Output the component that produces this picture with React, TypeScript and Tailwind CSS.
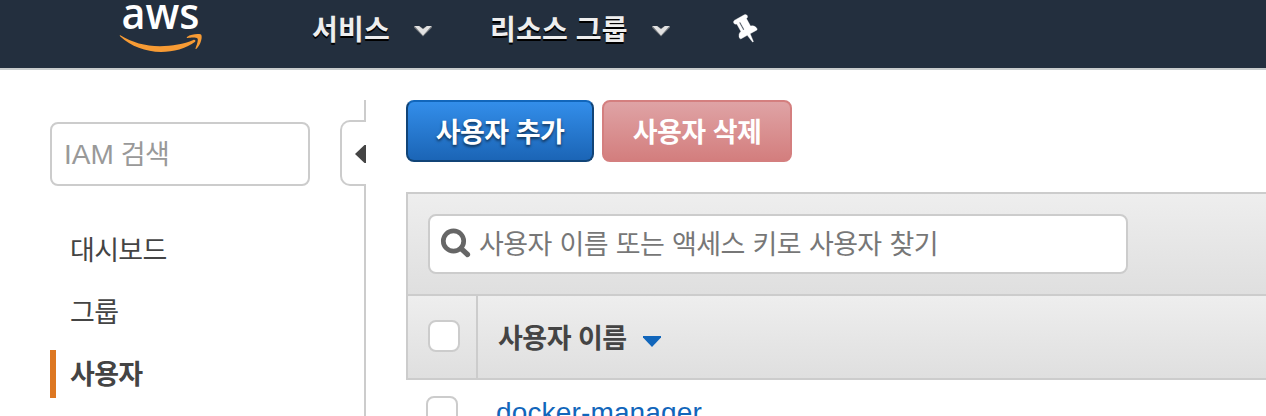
const HANGUL = "font-['Liberation_Sans','Noto_Sans_CJK_KR',sans-serif]";

function AwsLogo() {
  return (
    <svg className="block h-[68px] w-[84px] shrink-0" viewBox="119 0 84 68" aria-label="aws">
      <text
        x="121.5"
        y="28.5"
        fill="#fff"
        textLength="78"
        lengthAdjust="spacingAndGlyphs"
        className="font-['Open_Sans',sans-serif] text-[44px] font-semibold"
      >
        aws
      </text>
      <path
        d="M120.3 35.2C132 42.200 145 46.200 160 46.200C172 46.200 184 44 193.300 40C195 39.400 196.300 41 194.800 42.100C186 48.700 173.500 52 161 52C145.500 52 131 46.300 120.300 36.600C119.500 35.700 119.700 34.900 120.300 35.200Z"
        fill="#f79b34"
      />
      <path
        d="M187 36.900C191 34 198.300 33.500 201 34.500C202.800 36.500 201 44.500 196.500 48.700C195.800 49.300 195.200 49 195.500 48.200C196.600 45.400 198.600 40 197.500 38.400C196.200 37 190.500 37.500 187.700 37.900C186.800 38 186.500 37.300 187 36.900Z"
        fill="#f79b34"
      />
    </svg>
  );
}

function Chevron() {
  return (
    <svg className="block h-[12px] w-[18px]" viewBox="0 0 18 12">
      <path d="M0 1H5.500L9 3.500L12.500 1H18V2.500L9 11.500L0 2.500Z" fill="#73777b" />
      <path d="M0.500 1H5L9 4.200L13 1H17.500L9 10.500Z" fill="#e2e2e2" />
    </svg>
  );
}

function Pin() {
  return (
    <svg className="block h-[34px] w-[34px]" viewBox="0 0 34 34">
      <path
        transform="translate(10.5 4.500) rotate(-29) scale(0.0172 0.0168) translate(-896 -128)"
        fill="#fff"
        stroke="#fff"
        strokeWidth="20"
        d="M800 864v-448q0-14-9-23t-23-9-23 9-9 23v448q0 14 9 23t23 9 23-9 9-23zm672 352q0 26-19 45t-45 19h-429l-51 483q-2 12-10.500 20.500t-20.500 8.500h-1q-27 0-32-27l-76-485h-404q-26 0-45-19t-19-45q0-123 78.500-221.500t177.500-98.500v-512q-52 0-90-38t-38-90 38-90 90-38h640q52 0 90 38t38 90-38 90-90 38v512q99 0 177.500 98.500t78.500 221.500z"
      />
    </svg>
  );
}

function SearchIcon() {
  return (
    <svg className="block h-[32px] w-[32px] shrink-0" viewBox="0 0 32 32">
      <circle cx="13.500" cy="13" r="10.200" fill="none" stroke="#666" strokeWidth="4.700" />
      <path d="M21 20.500L27.500 26.500" stroke="#666" strokeWidth="5.200" strokeLinecap="round" />
    </svg>
  );
}

function NavMenu({ label }: { label: string }) {
  return (
    <div className="flex items-center pt-[2px]">
      <span className="whitespace-nowrap text-[28px] leading-[40px] font-bold tracking-[0.2px] text-[#eee] [text-shadow:0_2px_0_#000]">
        {label}
      </span>
      <span className="-mt-px ml-6">
        <Chevron />
      </span>
    </div>
  );
}

function Header() {
  return (
    <header className="flex h-[70px] items-start border-b-2 border-[#c8cccc] bg-[#232f3e] pl-[119px]">
      <AwsLogo />
      <nav className="flex h-[60px] items-center">
        <div className="ml-[109px] w-[178px]">
          <NavMenu label="서비스" />
        </div>
        <div className="w-[239px]">
          <NavMenu label="리소스 그룹" />
        </div>
        <Pin />
      </nav>
    </header>
  );
}

function Sidebar() {
  return (
    <aside className="flex w-[366px] shrink-0 justify-between">
      <div className="w-[310px] pt-[52px] pl-[50px]">
        <div className="flex h-16 items-center rounded-lg border-2 border-[#ccc] bg-white pt-[2px] pl-3 text-[27px] tracking-[-0.6px] text-[#999]">
          <span className="mr-[7px] text-[28px] tracking-normal">IAM</span>
          <span>검색</span>
        </div>
        <ul className="mt-[40px] flex flex-col gap-[14px] text-[27px] leading-[50px] tracking-[-0.7px] text-[#444]">
          <li className="h-12 pl-5">대시보드</li>
          <li className="h-12 pl-5">그룹</li>
          <li className="h-12 border-l-[6px] border-[#dd7722] pl-[14px] font-bold">사용자</li>
        </ul>
      </div>
      <div className="flex w-[26px] flex-col pt-[30px]">
        <div className="h-[21px] w-[2px] self-end rounded-b-sm bg-[#ccc]" />
        <div className="-mt-px flex h-[66px] items-center justify-end rounded-l-[10px] border-y-2 border-l-2 border-[#ccc] pt-[2px]">
          <svg className="block h-[18px] w-[11px]" viewBox="0 0 11 18">
            <path d="M0 9L9.500 0H11V18H9.500Z" fill="#444" />
          </svg>
        </div>
        <div className="w-[2px] flex-1 self-end bg-[#ccc]" />
      </div>
    </aside>
  );
}

function Users() {
  return (
    <main className="flex min-w-0 flex-1 flex-col pt-[30px] pl-[40px]">
      <div className="flex gap-2 text-[27px] font-bold tracking-[-0.5px] text-white">
        <button className="h-[62px] w-[188px] rounded-lg border-2 border-[#114477] border-t-[#1166bb] bg-linear-to-b from-[#338eea] to-[#1b65b6] pt-[4px] [text-shadow:0_2px_3px_rgba(0,0,0,0.6)]">
          사용자 추가
        </button>
        <button className="h-[62px] w-[190px] rounded-lg border-2 border-[#d47f7f] bg-linear-to-b from-[#dfa3a5] to-[#d37e7e] pt-[4px]">
          사용자 삭제
        </button>
      </div>
      <div className="mt-[30px] border-y-2 border-l-2 border-[#ccc]">
        <div className="h-[100px] bg-linear-to-b from-[#eee] to-[#dfdfdf] pt-5 pl-5">
          <div className="flex h-[60px] w-[700px] items-center rounded-lg border-2 border-[#ccc] bg-white pl-[10px] text-[27px] text-[#777]">
            <SearchIcon />
            <span className="ml-[7px] pt-[2px] whitespace-nowrap tracking-[-0.6px] [word-spacing:0.9px]">
              사용자 이름 또는 액세스 키로 사용자 찾기
            </span>
          </div>
        </div>
        <div className="flex h-[84px] items-stretch border-t-2 border-[#ccc] bg-linear-to-b from-[#eee] to-[#dfdfdf]">
          <div className="w-[70px] border-r-2 border-[#ccc] pt-6 pl-5">
            <div className="h-8 w-8 rounded-lg border-2 border-[#ccc] bg-white" />
          </div>
          <div className="flex items-center pt-1 pl-5 text-[27px] font-bold tracking-[-0.5px] text-[#444]">
            사용자 이름
            <svg className="mt-1 ml-4 block h-[11px] w-[18px]" viewBox="0 0 18 11">
              <path d="M0 0H18V1.500L9 11L0 1.500Z" fill="#1166bb" />
            </svg>
          </div>
        </div>
      </div>
      <div className="flex pt-4 pl-5">
        <div className="h-8 w-8 rounded-lg border-2 border-[#ccc] bg-white" />
        <span className="ml-[38px] pt-px text-[28px] leading-8 tracking-[0.15px] text-[#1166bb]">docker-manager</span>
      </div>
    </main>
  );
}

export default function App() {
  return (
    <div className={`flex h-[416px] w-[1266px] flex-col overflow-hidden bg-white ${HANGUL}`}>
      <Header />
      <div className="flex min-h-0 flex-1">
        <Sidebar />
        <Users />
      </div>
    </div>
  );
}
